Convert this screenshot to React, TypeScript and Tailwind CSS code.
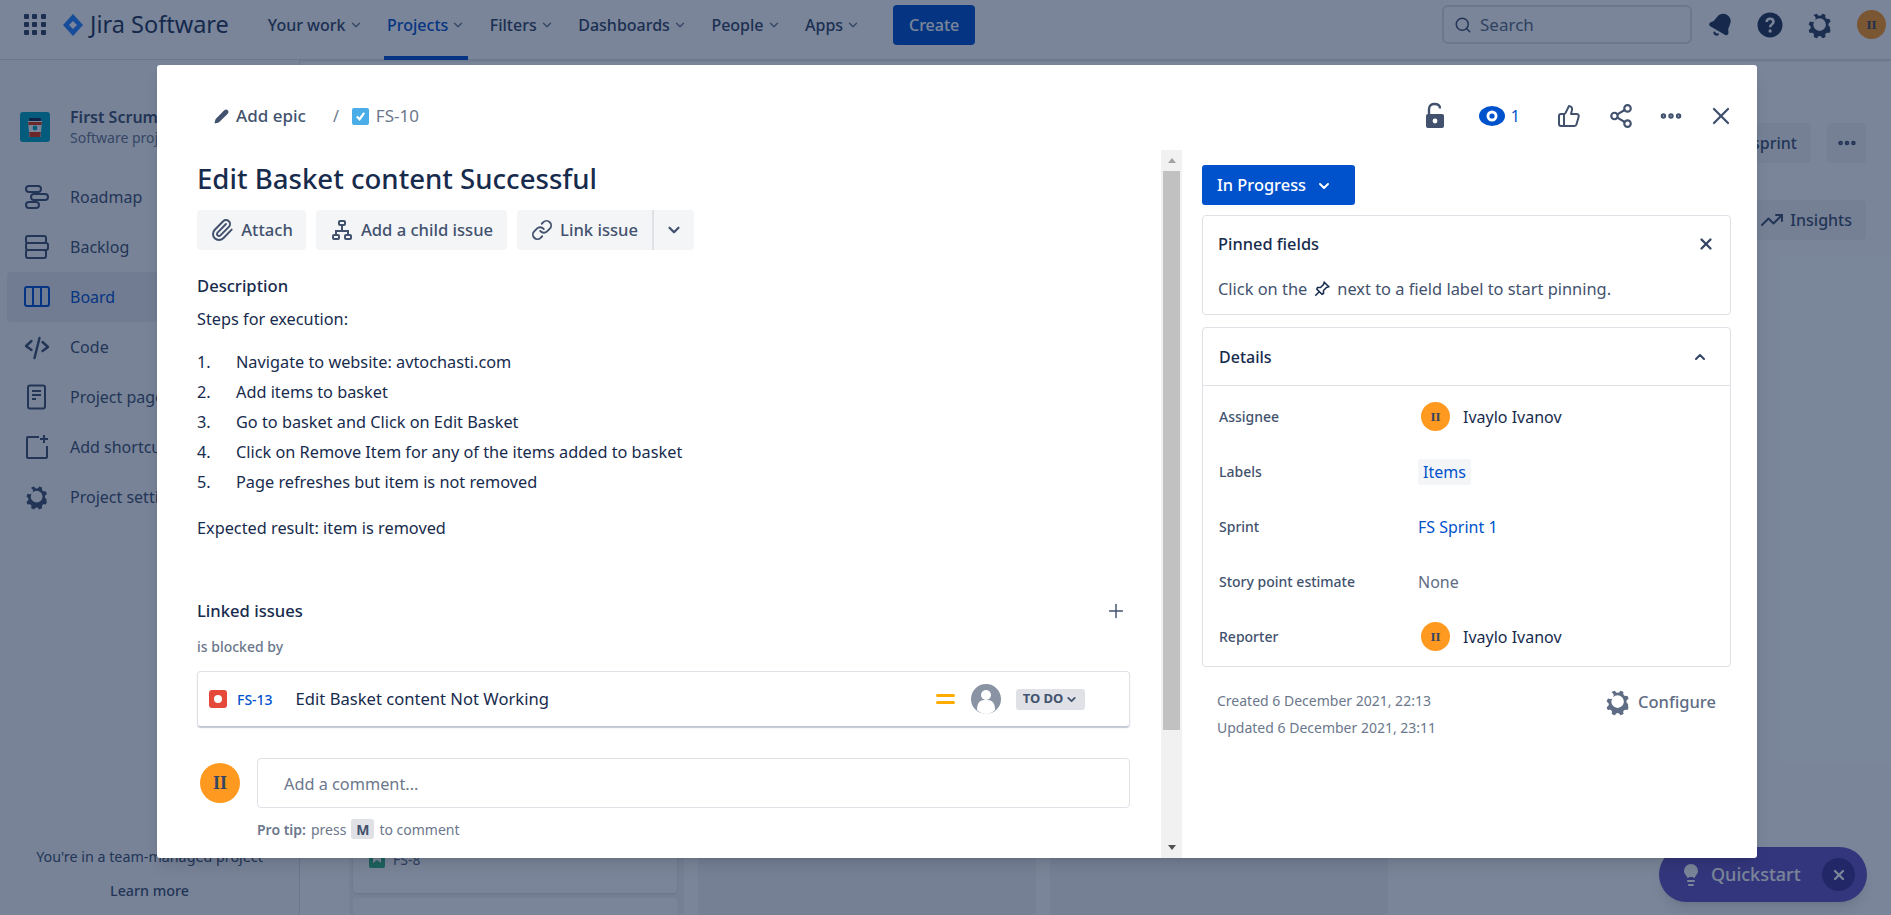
import React from "react";
import { Bell, ChevronDown, ChevronUp, Link, Paperclip, Pencil, Plus, X, Search, TrendingUp, MoreHorizontal, Share2, ThumbsUp, Lightbulb } from "lucide-react";

const GEAR =
  "M11.701 16.7a5.002 5.002 0 110-10.003 5.002 5.002 0 010 10.004m8.368-3.117a1.995 1.995 0 01-1.346-1.885c0-.876.563-1.613 1.345-1.885a.48.48 0 00.315-.574 8.947 8.947 0 00-.836-1.993.477.477 0 00-.598-.195 2.04 2.04 0 01-1.29.08 1.988 1.988 0 01-1.404-1.395 2.04 2.04 0 01.076-1.297.478.478 0 00-.196-.597 8.98 8.98 0 00-1.975-.826.479.479 0 00-.574.314 1.995 1.995 0 01-1.885 1.346 1.994 1.994 0 01-1.884-1.345.482.482 0 00-.575-.315c-.708.2-1.379.485-2.004.842a.47.47 0 00-.198.582A2.002 2.002 0 014.445 9.23a.478.478 0 00-.595.196 8.946 8.946 0 00-.833 1.994.48.48 0 00.308.572 1.995 1.995 0 011.323 1.877c0 .867-.552 1.599-1.324 1.877a.479.479 0 00-.308.57 8.99 8.99 0 00.723 1.79.477.477 0 00.624.194c.595-.273 1.343-.264 2.104.238.117.077.225.185.302.3.527.8.512 1.58.198 2.188a.473.473 0 00.168.628 8.946 8.946 0 002.11.897.474.474 0 00.57-.313 1.995 1.995 0 011.886-1.353c.878 0 1.618.567 1.887 1.353a.475.475 0 00.57.313 8.964 8.964 0 002.084-.883.473.473 0 00.167-.63c-.318-.608-.337-1.393.191-2.195.077-.116.185-.225.302-.302.772-.511 1.527-.513 2.125-.23a.477.477 0 00.628-.19 8.925 8.925 0 00.728-1.793.478.478 0 00-.314-.573";

function Gear({ size = 24, className = "" }: { size?: number; className?: string }) {
  return (
    <svg width={size} height={size} viewBox="0 0 24 24" className={className}>
      <path d={GEAR} fill="currentColor" fillRule="evenodd" />
    </svg>
  );
}

function Avatar({ size = 29, text = "text-[13px]" }: { size?: number; text?: string }) {
  return (
    <span
      className={`flex shrink-0 items-center justify-center rounded-full bg-[#ff991f] font-['Liberation_Serif',serif] font-bold text-[#344563] ${text}`}
      style={{ width: size, height: size }}
    >
      II
    </span>
  );
}

function NavLink({ label, active }: { label: string; active?: boolean }) {
  return (
    <div className={`relative flex h-[60px] items-center gap-[3px] px-[3px] pb-[10px] text-[16px] font-medium ${active ? "text-[#0052cc]" : "text-[#344563]"}`}>
      {label}
      <ChevronDown size={14} strokeWidth={2.4} className="text-[#6b778c]" />
      {active && <span className="absolute right-0 bottom-0 left-0 h-[4px] bg-[#0052cc]" />}
    </div>
  );
}

function TopNav() {
  return (
    <header className="flex h-[60px] items-center border-b border-[#dfe1e6] bg-white pr-[5px] pb-[10px] pl-[24px] shadow-sm">
      <div className="grid w-[22px] grid-cols-3 gap-[3px]">
        {Array.from({ length: 9 }).map((_, i) => (
          <span key={i} className="h-[5px] w-[5px] rounded-[1px] bg-[#344563]" />
        ))}
      </div>
      <svg width="24" height="24" viewBox="0 0 24 24" className="ml-[15px]">
        <path d="M12 1l10 11-10 11L2 12z" fill="#2684ff" />
        <path d="M12 8l4 4-4 4-4-4z" fill="#fff" />
      </svg>
      <span className="ml-[5px] text-[23.5px] text-[#253858]">Jira Software</span>
      <nav className="ml-[36px] flex gap-[18.5px] self-start">
        <NavLink label="Your work" />
        <NavLink label="Projects" active />
        <NavLink label="Filters" />
        <NavLink label="Dashboards" />
        <NavLink label="People" />
        <NavLink label="Apps" />
      </nav>
      <button className="ml-[30px] h-[40px] w-[82px] rounded-[4px] bg-[#0052cc] text-[16px] font-medium text-white">Create</button>
      <div className="ml-auto flex h-[39px] w-[250px] items-center gap-[8px] rounded-[6px] border-2 border-[#dfe1e6] pl-[10px] text-[17px] text-[#5e6c84]">
        <Search size={18} strokeWidth={2} className="text-[#42526e]" />
        Search
      </div>
      <Bell size={26} fill="currentColor" className="ml-[16px] rotate-[30deg] text-[#253858]" />
      <svg width="30" height="30" viewBox="0 0 24 24" className="ml-[21px] text-[#253858]">
        <circle cx="12" cy="12" r="10" fill="currentColor" />
        <path d="M9.3 9.6c0-1.6 1.2-2.7 2.8-2.7s2.7 1 2.7 2.4c0 2.2-2.7 2.2-2.7 4.4" fill="none" stroke="#fff" strokeWidth="2" />
        <circle cx="12.1" cy="16.8" r="1.3" fill="#fff" />
      </svg>
      <Gear size={30} className="ml-[20px] text-[#344563]" />
      <span className="ml-[22px]">
        <Avatar size={29} text="text-[13px]" />
      </span>
    </header>
  );
}

function SideIcon({ name }: { name: string }) {
  const stroke = name === "Board" ? "#0052cc" : "#42526e";
  const props = { fill: "none", stroke, strokeWidth: 2 };
  return (
    <svg width="28" height="28" viewBox="0 0 28 28" className="shrink-0">
      {name === "Roadmap" && (
        <g {...props}>
          <rect x="3" y="3" width="15" height="6" rx="3" />
          <rect x="8" y="11" width="17" height="6" rx="3" />
          <rect x="3" y="19" width="13" height="6" rx="3" />
        </g>
      )}
      {name === "Backlog" && (
        <g {...props}>
          <rect x="3" y="3" width="20" height="7" rx="2" />
          <rect x="3" y="10" width="22" height="7" rx="2" />
          <rect x="3" y="17" width="20" height="8" rx="2" />
        </g>
      )}
      {name === "Board" && (
        <g {...props}>
          <rect x="2" y="4" width="24" height="19" rx="2" />
          <path d="M10 4v19M18 4v19" />
        </g>
      )}
      {name === "Code" && (
        <g {...props} strokeWidth={2.4} strokeLinecap="round" strokeLinejoin="round">
          <path d="M8.5 8L3 13l5.5 4M19.5 9L25 14l-5.5 4M16.5 5l-5 20" />
        </g>
      )}
      {name === "Project pages" && (
        <g {...props}>
          <rect x="5" y="2.5" width="17" height="23" rx="2" />
          <path d="M9 8h9M9 12h9M9 16h4" />
        </g>
      )}
      {name === "Add shortcut" && (
        <g {...props}>
          <path d="M16 4H5a1 1 0 00-1 1v19a1 1 0 001 1h18a1 1 0 001-1V13" />
          <path d="M21 2v8M17 6h8" />
        </g>
      )}
      {name === "Project settings" && <path d={GEAR} transform="scale(1.17)" fill={stroke} fillRule="evenodd" />}
    </svg>
  );
}

const SIDE_ITEMS = ["Roadmap", "Backlog", "Board", "Code", "Project pages", "Add shortcut", "Project settings"];

function Sidebar() {
  return (
    <aside className="flex w-[300px] shrink-0 flex-col border-r border-[#dfe1e6] bg-[#fafbfc] pt-[46px] text-[#42526e]">
      <div className="flex items-center gap-[20px] pl-[20px]">
        <svg width="30" height="30" viewBox="0 0 30 30">
          <rect width="30" height="30" rx="3" fill="#00a3bf" />
          <rect x="9" y="6" width="12" height="3" rx="1" fill="#172b4d" />
          <path d="M8 9h14l-1.4 16H9.4z" fill="#fff" />
          <path d="M8.2 10h13.600l-.3 3H8.500z" fill="#de350b" />
          <path d="M9.2 20h11.600l-.5 5H9.700z" fill="#de350b" />
          <circle cx="15" cy="16" r="2.400" fill="#00a3bf" />
        </svg>
        <div>
          <div className="h-[22px] text-[16px] leading-[22px] font-semibold whitespace-nowrap text-[#42526e]">First Scrum Project</div>
          <div className="h-[20px] text-[14px] leading-[20px] whitespace-nowrap text-[#6b778c]">Software project</div>
        </div>
      </div>
      <div className="mt-[24px] flex flex-col">
        {SIDE_ITEMS.map((item) => (
          <div
            key={item}
            className={`ml-[7px] flex h-[50px] items-center gap-[19px] rounded-l-[4px] pl-[16px] text-[16px] ${item === "Board" ? "bg-[#ebecf0] text-[#0052cc]" : ""}`}
          >
            <SideIcon name={item} />
            {item}
          </div>
        ))}
      </div>
      <div className="mt-auto mb-[7px] flex flex-col items-center text-center text-[14.3px] text-[#42526e]">
        <span className="h-[34px] leading-[34px]">You're in a team-managed project</span>
        <span className="h-[34px] leading-[34px] font-medium">Learn more</span>
      </div>
    </aside>
  );
}

function Board() {
  return (
    <main className="flex min-w-0 flex-1 flex-col pr-[25px] pl-[49px]">
      <div className="flex h-[103px] shrink-0 items-end justify-end gap-[16px]">
        <button className="h-[40px] rounded-[4px] bg-[#f4f5f7] px-[14px] text-[16px] font-medium whitespace-nowrap text-[#42526e]">Complete sprint</button>
        <button className="flex h-[40px] w-[39px] items-center justify-center rounded-[4px] bg-[#f4f5f7] text-[#42526e]">
          <MoreHorizontal size={22} strokeWidth={3} />
        </button>
      </div>
      <div className="mt-[37px] flex h-[40px] shrink-0 justify-end">
        <button className="flex items-center gap-[6px] rounded-[4px] bg-[#f4f5f7] px-[14px] text-[16px] font-medium text-[#42526e]">
          <TrendingUp size={24} />
          Insights
        </button>
      </div>
      <div className="flex flex-1 gap-[14px] overflow-hidden">
        <div className="flex h-full w-[335px] flex-col justify-end gap-[5px] rounded-[4px] bg-[#f4f5f7] pr-[7px] pl-[4px]">
          <div className="flex h-[68px] items-start gap-[8px] rounded-[4px] bg-white px-[16px] pt-[27px] text-[14px] text-[#5e6c84] shadow-sm">
            <span className="flex h-[16px] w-[16px] items-start justify-center rounded-[2px] bg-[#36b37e]">
              <svg width="8" height="11" viewBox="0 0 8 11">
                <path d="M0 0h8v11L4 8l-4 3z" fill="#fff" />
              </svg>
            </span>
            <span className="mt-[-3px]">FS-8</span>
          </div>
          <div className="h-[17px] rounded-t-[4px] bg-white" />
        </div>
        <div className="h-full w-[338px] rounded-[4px] bg-[#f4f5f7]" />
        <div className="h-full w-[338px] rounded-[4px] bg-[#f4f5f7]" />
      </div>
    </main>
  );
}

function ActionButton({ icon, label, className = "" }: { icon: React.ReactNode; label: string; className?: string }) {
  return (
    <button className={`flex h-[40px] items-center gap-[7px] bg-[#f4f5f7] text-[16.6px] font-medium text-[#42526e] ${className}`}>
      {icon}
      {label}
    </button>
  );
}

const STEPS = [
  "Navigate to website: avtochasti.com",
  "Add items to basket",
  "Go to basket and Click on Edit Basket",
  "Click on Remove Item for any of the items added to basket",
  "Page refreshes but item is not removed",
];

function IssuePane() {
  return (
    <div className="min-w-0 flex-1 pr-[31px] pl-[40px] text-[16.3px] text-[#172b4d]">
      <h1 className="flex h-[56px] items-center pt-[2px] text-[27.6px] font-medium text-[#172b4d]">Edit Basket content Successful</h1>
      <div className="mt-[4px] flex gap-[10px]">
        <ActionButton className="w-[109px] justify-center rounded-[4px]" icon={<Paperclip size={24} />} label="Attach" />
        <ActionButton
          className="w-[191px] justify-center rounded-[4px]"
          icon={
            <svg width="24" height="24" viewBox="0 0 24 24" fill="none" stroke="currentColor" strokeWidth="2">
              <rect x="9" y="3" width="6" height="4" rx="1" />
              <rect x="3" y="17" width="6" height="4" rx="1" />
              <rect x="15" y="17" width="6" height="4" rx="1" />
              <path d="M12 7v6M6 17v-4h12v4" />
            </svg>
          }
          label="Add a child issue"
        />
        <div className="flex">
          <ActionButton className="w-[135px] justify-center rounded-l-[4px]" icon={<Link size={22} />} label="Link issue" />
          <button className="flex h-[40px] w-[42px] items-center justify-center rounded-r-[4px] border-l-2 border-[#dfe1e6] bg-[#f4f5f7] text-[#42526e]">
            <ChevronDown size={18} strokeWidth={3} />
          </button>
        </div>
      </div>
      <h2 className="mt-[24px] h-[24px] text-[16.6px] leading-[24px] font-medium">Description</h2>
      <p className="mt-[9px] h-[24px] leading-[24px]">Steps for execution:</p>
      <ol className="mt-[16px]">
        {STEPS.map((step, i) => (
          <li key={step} className="flex h-[30px] items-center">
            <span className="w-[39px]">{i + 1}.</span>
            {step}
          </li>
        ))}
      </ol>
      <p className="mt-[19px] h-[24px] leading-[24px]">Expected result: item is removed</p>
      <div className="mt-[59px] flex h-[24px] items-center justify-between pr-[3px]">
        <h2 className="text-[16.6px] font-medium">Linked issues</h2>
        <Plus size={22} strokeWidth={1.6} className="text-[#42526e]" />
      </div>
      <div className="mt-[14px] h-[20px] text-[14px] leading-[20px] font-medium text-[#6b778c]">is blocked by</div>
      <div className="mt-[14px] flex h-[56px] items-center rounded-[4px] border border-[#dfe1e6] border-b-[#c1c7d0] pl-[11px] shadow-[0_1px_1px_rgba(9,30,66,0.25)]">
        <span className="flex h-[18px] w-[18px] items-center justify-center rounded-[3px] bg-[#e5493a]">
          <span className="h-[8px] w-[8px] rounded-full bg-white" />
        </span>
        <span className="ml-[10px] text-[14px] font-medium text-[#0052cc]">FS-13</span>
        <span className="ml-[23px] text-[16.6px]">Edit Basket content Not Working</span>
        <span className="ml-auto flex flex-col gap-[4px]">
          <span className="h-[3px] w-[19px] rounded-full bg-[#ffab00]" />
          <span className="h-[3px] w-[19px] rounded-full bg-[#ffab00]" />
        </span>
        <svg width="30" height="30" viewBox="0 0 30 30" className="ml-[16px]">
          <circle cx="15" cy="15" r="15" fill="#8993a4" />
          <circle cx="15" cy="11" r="5" fill="#fff" />
          <path d="M6 26c0-9 4-10 9-10s9 1 9 10c-2 2-5 4-9 4s-7-2-9-4z" fill="#fff" />
        </svg>
        <span className="mr-[44px] ml-[15px] flex h-[21px] w-[69px] items-center justify-center gap-[2px] rounded-[3px] bg-[#dfe1e6] text-[13px] font-bold text-[#42526e]">
          TO DO
          <ChevronDown size={13} strokeWidth={3.4} />
        </span>
      </div>
      <div className="mt-[31px] flex items-center gap-[17px]">
        <span className="ml-[3px]">
          <Avatar size={40} text="text-[18px]" />
        </span>
        <div className="flex h-[50px] flex-1 items-center rounded-[4px] border border-[#dfe1e6] pt-[2px] pl-[26px] text-[#6b778c]">Add a comment...</div>
      </div>
      <div className="mt-[11px] ml-[60px] flex h-[20px] items-center text-[14px] text-[#6b778c]">
        <b className="font-semibold">Pro tip:</b>
        <span className="ml-[5px]">press</span>
        <kbd className="mx-[5px] flex h-[20px] w-[23px] items-center justify-center rounded-[3px] bg-[#dfe1e6] font-['Noto_Sans',sans-serif] font-bold text-[#42526e]">M</kbd>
        to comment
      </div>
    </div>
  );
}

function ScrollBar() {
  return (
    <div className="flex w-[21px] shrink-0 flex-col items-center bg-[#f1f1f1]">
      <span className="mt-[8px] h-0 w-0 border-x-[4px] border-b-[5px] border-x-transparent border-b-[#a3a3a3]" />
      <span className="mt-[8px] h-[559px] w-[17px] bg-[#c1c1c1]" />
      <span className="mt-auto mb-[8px] h-0 w-0 border-x-[4px] border-t-[5px] border-x-transparent border-t-[#505050]" />
    </div>
  );
}

function DetailRow({ label, children }: { label: string; children: React.ReactNode }) {
  return (
    <div className="flex h-[55px] items-center pl-[16px]">
      <span className="w-[199px] shrink-0 text-[14px] font-medium text-[#42526e]">{label}</span>
      {children}
    </div>
  );
}

function Person() {
  return (
    <span className="flex items-center gap-[13px] pl-[3px] text-[16px] text-[#172b4d]">
      <Avatar />
      Ivaylo Ivanov
    </span>
  );
}

function DetailsPane() {
  return (
    <div className="w-[575px] shrink-0 pt-[15px] pr-[26px] pl-[20px] text-[#172b4d]">
      <button className="flex h-[40px] w-[153px] items-center gap-[9px] rounded-[3px] bg-[#0052cc] pt-[1px] pl-[15px] text-[16.4px] font-medium text-white">
        In Progress
        <ChevronDown size={16} strokeWidth={3} className="ml-[1px]" />
      </button>
      <section className="mt-[10px] h-[100px] rounded-[4px] border border-[#dfe1e6] px-[15px]">
        <div className="flex h-[56px] items-center justify-between">
          <h3 className="text-[16.4px] font-medium">Pinned fields</h3>
          <X size={18} strokeWidth={3} className="text-[#344563]" />
        </div>
        <p className="mt-[5px] flex items-center text-[16.4px] text-[#42526e]">
          Click on the
          <svg width="18" height="18" viewBox="0 0 24 24" fill="none" stroke="#172b4d" strokeWidth="2" className="mx-[6px]">
            <path d="M15 3l6 6-3 1-4 4 0 4-2 1-7-7 1-2 4 0 4-4zM8 16l-5 5" />
          </svg>
          next to a field label to start pinning.
        </p>
      </section>
      <section className="mt-[12px] h-[340px] rounded-[4px] border border-[#dfe1e6]">
        <div className="flex h-[58px] items-center justify-between border-b border-[#dfe1e6] pr-[22px] pl-[16px]">
          <h3 className="text-[16px] font-medium">Details</h3>
          <ChevronUp size={16} strokeWidth={3} className="text-[#344563]" />
        </div>
        <div className="pt-[3px]">
          <DetailRow label="Assignee">
            <Person />
          </DetailRow>
          <DetailRow label="Labels">
            <span className="rounded-[3px] bg-[#f4f5f7] px-[5px] py-[1px] text-[16px] text-[#0052cc]">Items</span>
          </DetailRow>
          <DetailRow label="Sprint">
            <span className="text-[16px] text-[#0052cc]">FS Sprint 1</span>
          </DetailRow>
          <DetailRow label="Story point estimate">
            <span className="text-[16px] text-[#5e6c84]">None</span>
          </DetailRow>
          <DetailRow label="Reporter">
            <Person />
          </DetailRow>
        </div>
      </section>
      <div className="mt-[20px] flex items-start justify-between pr-[15px] pl-[15px]">
        <div className="text-[14px] leading-[27px] text-[#6b778c]">
          <div>Created 6 December 2021, 22:13</div>
          <div>Updated 6 December 2021, 23:11</div>
        </div>
        <div className="flex items-center gap-[5px] text-[16.5px] font-medium text-[#5e6c84]">
          <Gear size={30} />
          Configure
        </div>
      </div>
    </div>
  );
}

function IssueModal() {
  return (
    <div className="flex h-[793px] w-[1600px] flex-col overflow-hidden rounded-[3px] bg-white shadow-lg">
      <div className="flex h-[85px] shrink-0 items-center pt-[17px] pr-[22px] pl-[57px]">
        <Pencil size={15} fill="#42526e" className="text-[#42526e]" />
        <span className="ml-[7px] text-[17px] font-medium text-[#42526e]">Add epic</span>
        <span className="ml-[27px] text-[16px] text-[#6b778c]">/</span>
        <span className="ml-[13px] flex h-[17px] w-[17px] items-center justify-center rounded-[2px] bg-[#4bade8]">
          <svg width="11" height="11" viewBox="0 0 12 12" fill="none" stroke="#fff" strokeWidth="2.4">
            <path d="M2 6l3 3 5-7" />
          </svg>
        </span>
        <span className="ml-[7px] text-[17px] text-[#6b778c]">FS-10</span>
        <div className="ml-auto flex items-center text-[#42526e]">
          <svg width="20" height="28" viewBox="0 0 20 28">
            <path d="M4 12V7c0-3.500 2.500-5 5.500-5S15 3.500 15 6.500" fill="none" stroke="#42526e" strokeWidth="2.400" />
            <rect x="1" y="12" width="18" height="14" rx="2" fill="#42526e" />
            <circle cx="10" cy="19" r="2.400" fill="#fff" />
          </svg>
          <svg width="26" height="20" viewBox="0 0 26 20" className="ml-[34px]">
            <ellipse cx="13" cy="10" rx="13" ry="10" fill="#0052cc" />
            <circle cx="13" cy="10" r="5.500" fill="#fff" />
            <circle cx="13" cy="10" r="2.600" fill="#0052cc" />
          </svg>
          <span className="ml-[6px] text-[16px] text-[#0052cc]">1</span>
          <ThumbsUp size={24} strokeWidth={2} className="ml-[37px]" />
          <Share2 size={26} strokeWidth={2} className="ml-[27px]" />
          <MoreHorizontal size={26} strokeWidth={3} className="ml-[24px]" />
          <X size={28} strokeWidth={2} className="ml-[23px]" />
        </div>
      </div>
      <div className="flex min-h-0 flex-1">
        <IssuePane />
        <ScrollBar />
        <DetailsPane />
      </div>
    </div>
  );
}

export default function App() {
  return (
    <div className="relative flex h-[915px] w-[1891px] flex-col overflow-hidden bg-white font-['Noto_Sans',sans-serif]">
      <TopNav />
      <div className="flex min-h-0 flex-1">
        <Sidebar />
        <Board />
      </div>
      <div className="absolute right-[24px] bottom-[13px] flex h-[55px] w-[208px] items-center rounded-full bg-[#6554c0] pl-[20px] text-[18px] font-medium text-white shadow-lg">
        <Lightbulb size={24} fill="#fff" />
        <span className="ml-[8px]">Quickstart</span>
        <span className="mr-[12px] ml-auto flex h-[33px] w-[33px] items-center justify-center rounded-full bg-[#403294]">
          <X size={16} strokeWidth={3.5} />
        </span>
      </div>
      {/* blanket + issue dialog */}
      <div className="absolute inset-0 bg-[#091e42]/54 pt-[65px] pl-[157px]">
        <IssueModal />
      </div>
    </div>
  );
}
